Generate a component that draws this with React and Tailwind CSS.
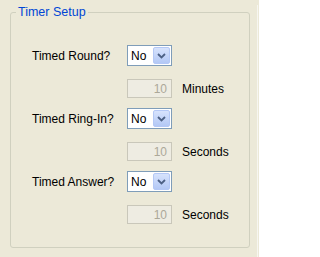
import React from 'react';

const rows = [
  { label: 'Timed Round?', value: 'No', amount: '10', unit: 'Minutes' },
  { label: 'Timed Ring-In?', value: 'No', amount: '10', unit: 'Seconds' },
  { label: 'Timed Answer?', value: 'No', amount: '10', unit: 'Seconds' },
];

function Dropdown({ value }) {
  return (
    <div className="flex items-center w-[45px] h-[21px] bg-white border border-[#7F9DB9] pl-[3px] pr-px">
      <span className="flex-1 text-black leading-none">{value}</span>
      <div className="flex items-center justify-center w-[17px] h-[17px] rounded-[2px] border border-[#B4C8F6] bg-gradient-to-b from-[#D7E3FD] to-[#B3C8F5]">
        <svg width="9" height="6" viewBox="0 0 9 6">
          <path d="M1 1 L4.5 4.5 L8 1" fill="none" stroke="#4D6185" strokeWidth="1.8" />
        </svg>
      </div>
    </div>
  );
}

function NumberBox({ value }) {
  return (
    <div className="flex items-center justify-end w-[45px] h-[19px] bg-[#EEECE2] border border-[#C9C7BA] pr-[4px] text-[#ACA899] leading-none">
      {value}
    </div>
  );
}

export default function App() {
  return (
    <div
      className="flex w-[259px] h-[257px] bg-[#ECE9D8] pl-[10px] pt-[5px] text-[12px] text-black"
      style={{ fontFamily: '"Liberation Sans", Arial, sans-serif' }}
    >
      <fieldset className="w-[240px] h-[243px] border border-[#D0D0BF] rounded-[3px]">
        <legend className="ml-[5px] px-[2px] leading-[14px] text-[12.5px] text-[#0046D5]">Timer Setup</legend>
        <div className="flex flex-col pl-[21px] pt-[26px]">
          {rows.map((r, i) => (
            <div key={r.label} className={i === 0 ? 'flex flex-col' : 'flex flex-col mt-[10px]'}>
              <div className="flex items-center">
                <span className="w-[95px]">{r.label}</span>
                <Dropdown value={r.value} />
              </div>
              <div className="flex items-center mt-[13px] ml-[95px]">
                <NumberBox value={r.amount} />
                <span className="ml-[10px]">{r.unit}</span>
              </div>
            </div>
          ))}
        </div>
      </fieldset>
      <div className="ml-auto mr-px w-px bg-[#F7F6F0]" />
    </div>
  );
}
